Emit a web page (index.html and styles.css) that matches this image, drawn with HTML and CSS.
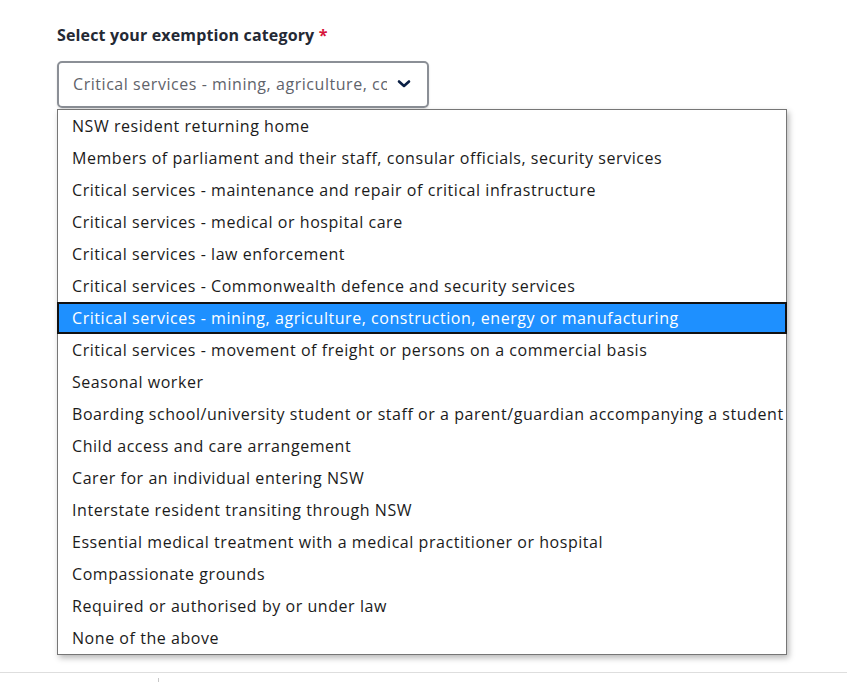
FILE: index.html
```html
<!DOCTYPE html>
<html lang="en">
<head>
<meta charset="utf-8">
<title>Exemption category</title>
<link rel="stylesheet" href="styles.css">
</head>
<body>
<div class="page">
  <div class="field">
    <label class="label">Select your exemption category <span class="req">*</span></label>
    <div class="select-wrap">
      <div class="select">
        <span class="select-value">Critical services - mining, agriculture, construction, energy or manufacturing</span>
        <svg class="chev" width="14" height="10" viewBox="0 0 14 10"><path d="M2 2.5 L7 7 L12 2.5" fill="none" stroke="#0a1f44" stroke-width="2.6" stroke-linecap="round" stroke-linejoin="round"/></svg>
      </div>
      <ul class="menu">
        <li class="opt">NSW resident returning home</li>
        <li class="opt">Members of parliament and their staff, consular officials, security services</li>
        <li class="opt">Critical services - maintenance and repair of critical infrastructure</li>
        <li class="opt">Critical services - medical or hospital care</li>
        <li class="opt">Critical services - law enforcement</li>
        <li class="opt">Critical services - Commonwealth defence and security services</li>
        <li class="opt sel">Critical services - mining, agriculture, construction, energy or manufacturing</li>
        <li class="opt">Critical services - movement of freight or persons on a commercial basis</li>
        <li class="opt">Seasonal worker</li>
        <li class="opt">Boarding school/university student or staff or a parent/guardian accompanying a student</li>
        <li class="opt">Child access and care arrangement</li>
        <li class="opt">Carer for an individual entering NSW</li>
        <li class="opt">Interstate resident transiting through NSW</li>
        <li class="opt">Essential medical treatment with a medical practitioner or hospital</li>
        <li class="opt">Compassionate grounds</li>
        <li class="opt">Required or authorised by or under law</li>
        <li class="opt">None of the above</li>
      </ul>
    </div>
  </div>
  <div class="footer-rule"></div>
  <div class="tick"></div>
</div>
</body>
</html>
```
FILE: styles.css
```css
* { box-sizing: border-box; }
html, body { margin: 0; padding: 0; background: #fff; }
body {
  font-family: "Open Sans", "DejaVu Sans", sans-serif;
  color: #242934;
  width: 847px;
  height: 682px;
  overflow: hidden;
}
.page { position: relative; height: 682px; }
.field { padding: 25px 0 0 57px; height: 672px; }
.label {
  display: block;
  font-size: 16px;
  font-weight: 700;
  letter-spacing: 0.15px;
  line-height: 20px;
  color: #242934;
}
.req { color: #d7153a; }
.select-wrap { position: relative; margin-top: 16px; }
.select {
  width: 372px;
  height: 47px;
  border: 2px solid #8b8f96;
  border-radius: 5px;
  display: flex;
  align-items: center;
  padding: 0 14px 2px 14px;
  gap: 10px;
  box-shadow: 0 1px 2px rgba(0,0,0,0.15);
}
.select-value {
  flex: 1;
  white-space: nowrap;
  overflow: hidden;
  font-size: 16px;
  letter-spacing: 0.55px;
  color: #5f636b;
}
.chev { flex: none; margin-right: 2px; }
.menu {
  position: absolute;
  left: 0;
  top: 48px;
  width: 730px;
  margin: 0;
  padding: 0;
  list-style: none;
  background: #fff;
  border: 1px solid #767676;
  box-shadow: 2px 3px 6px rgba(0,0,0,0.28);
}
.opt {
  height: 32px;
  line-height: 32px;
  padding-left: 14px;
  font-size: 16px;
  letter-spacing: 0.55px;
  color: #1b1b1b;
  white-space: nowrap;
}
.opt.sel {
  background: #1e90ff;
  color: #fff;
  border: 2px solid #111;
  line-height: 28px;
  padding-left: 13px;
  margin: 0 -1px;
}
.footer-rule { height: 1px; background: #dedede; }
.tick {
  position: absolute;
  left: 158px;
  top: 678px;
  width: 1px;
  height: 4px;
  background: #c8c8c8;
}
```
